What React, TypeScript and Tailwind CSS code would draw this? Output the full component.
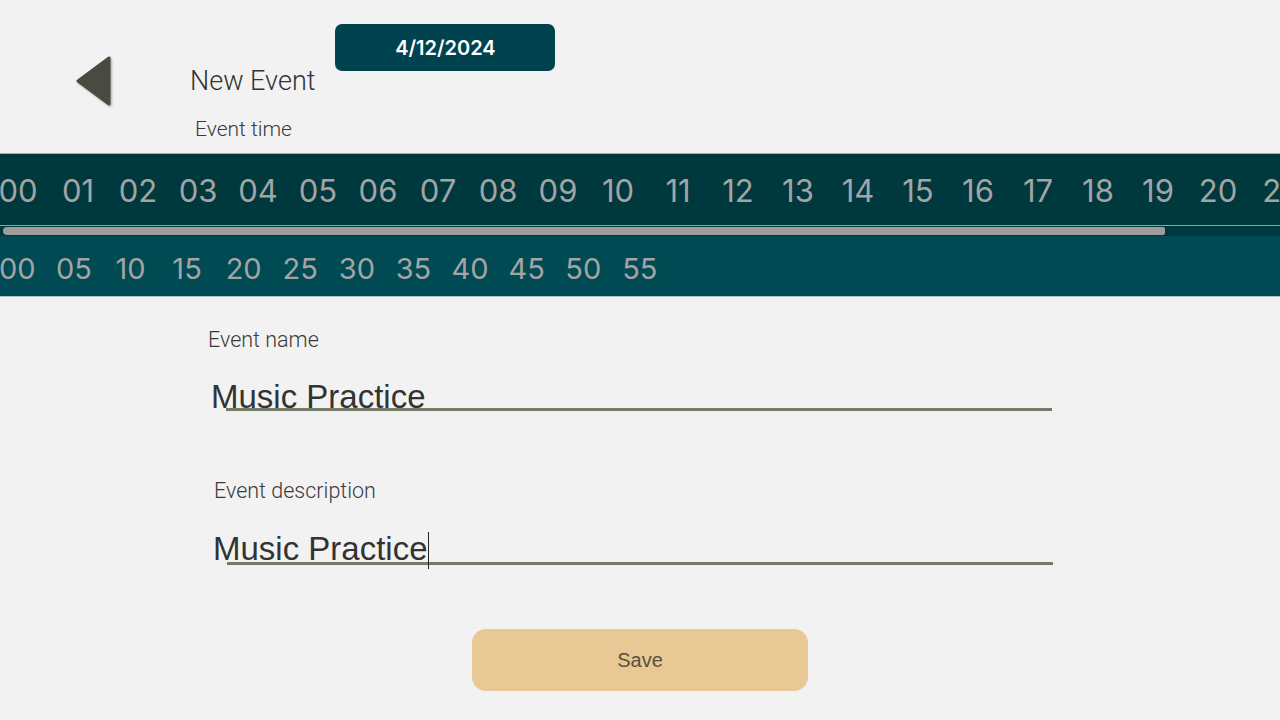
import React from "react";

const HOURS = Array.from({ length: 24 }, (_, i) => String(i).padStart(2, "0"));
const MINUTES = Array.from({ length: 12 }, (_, i) => String(i * 5).padStart(2, "0"));

function BackArrow() {
  return (
    <svg width="40" height="56" viewBox="0 0 40 56" className="drop-shadow-[1px_1px_1px_rgba(0,0,0,0.35)]">
      <polygon
        points="4,26 35,3 35,49"
        fill="#4a4a41"
        stroke="#4a4a41"
        strokeWidth="3"
        strokeLinejoin="round"
      />
    </svg>
  );
}

function Field({
  label,
  value,
  labelLeft,
  lineLeft,
  textShift,
  cursor,
  labelTop,
  fieldTop,
}: {
  label: string;
  value: string;
  labelLeft: string;
  lineLeft: string;
  textShift: string;
  cursor?: boolean;
  labelTop: string;
  fieldTop: string;
}) {
  return (
    <div>
      <div className={`${labelTop} ${labelLeft} text-[21.5px] leading-[24px] font-light text-[#3a3a3a] font-['Roboto',sans-serif]`}>
        {label}
      </div>
      <div className={`${fieldTop} ${lineLeft} w-[826px] h-[31px] border-b-[3px] border-[#747b69]`}>
        <div className={`relative ${textShift} text-[33px] leading-[28px] text-[#333333] font-['Liberation_Sans',Arial,sans-serif] whitespace-nowrap`}>
          {value}
          {cursor && <span className="inline-block w-px h-[37px] bg-[#222] align-[-9px]" />}
        </div>
      </div>
    </div>
  );
}

export default function App() {
  return (
    <div className="w-full h-[720px] bg-[#f2f2f2] overflow-hidden font-['Roboto',sans-serif]">
      {/* header */}
      <div className="flex items-start pt-[24px] pl-[74px]">
        <div className="mt-[31px]">
          <BackArrow />
        </div>
        <div className="ml-[76px] mt-[42px] text-[27px] leading-[30px] font-light text-[#333333]">New Event</div>
        <div className="ml-[20px] w-[220px] h-[47px] rounded-[7px] bg-[#00434f] flex items-center justify-center text-white text-[20px] font-semibold font-['Inter',sans-serif]">
          4/12/2024
        </div>
      </div>
      <div className="ml-[195px] mt-[6px] text-[21px] leading-[24px] font-light text-[#3a3a3a]">Event time</div>

      {/* time pickers */}
      <div className="mt-[12px] bg-[#00393d] border-t border-[#9bb4b4]">
        <div className="h-[71px] overflow-hidden flex items-center">
          <div className="flex -ml-[12px] shrink-0 pt-[4px]">
            {HOURS.map((h) => (
              <div key={h} className="w-[60px] shrink-0 text-center text-[31px] text-[#a4a4a4] font-['Inter',sans-serif]">
                {h}
              </div>
            ))}
          </div>
        </div>
        <div className="h-px bg-[#8fa3a3]" />
        <div className="h-[10px] pt-[1px]">
          <div className="ml-[3px] w-[1162px] h-[8px] rounded-l-[4px] rounded-r-[2px] bg-[#a09c9c]" />
        </div>
      </div>
      <div className="h-[61px] bg-[#004a53] border-b border-[#a9c4c4] overflow-hidden flex items-center">
        <div className="flex -ml-[11px] shrink-0 pt-[5px]">
          {MINUTES.map((m) => (
            <div key={m} className="w-[56.6px] shrink-0 text-center text-[29px] text-[#a4a4a4] font-['Inter',sans-serif]">
              {m}
            </div>
          ))}
        </div>
      </div>

      {/* form */}
      <Field
        label="Event name"
        value="Music Practice"
        labelTop="mt-[31px]"
        labelLeft="ml-[208px]"
        fieldTop="mt-[28px]"
        lineLeft="ml-[226px]"
        textShift="-ml-[15px] top-[3px]"
      />
      <Field
        label="Event description"
        value="Music Practice"
        labelTop="mt-[68px]"
        labelLeft="ml-[214px]"
        fieldTop="mt-[31px]"
        lineLeft="ml-[227px]"
        textShift="-ml-[14px] -top-[2px]"
        cursor
      />

      <div className="mt-[64px] ml-[472px] w-[336px] h-[62px] rounded-[14px] bg-[#e8c894] flex items-center justify-center text-[20px] text-[#5a5040] font-['Liberation_Sans',Arial,sans-serif]">
        Save
      </div>
    </div>
  );
}
